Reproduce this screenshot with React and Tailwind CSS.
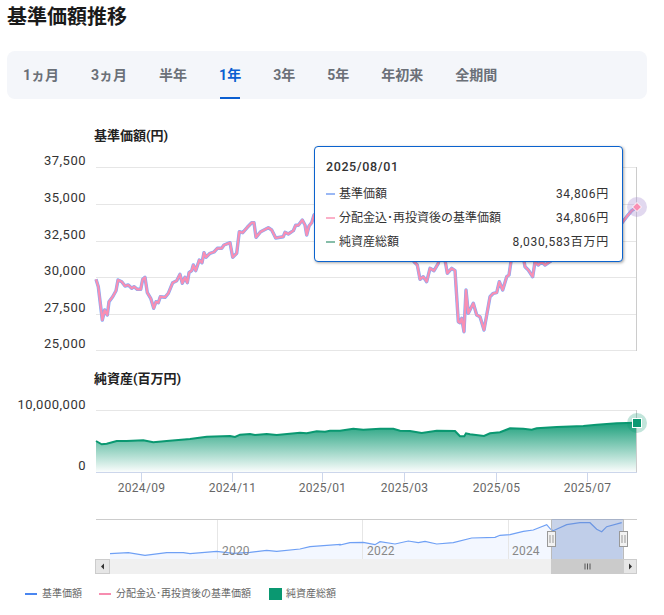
const font = { fontFamily: 'Roboto, "Noto Sans CJK JP", sans-serif' };

const tabs = ['1ヵ月', '3ヵ月', '半年', '1年', '3年', '5年', '年初来', '全期間'];

const zoomed = (pts, ox, oy) => pts.map(([x, y]) => [ox + x / 3, oy + y / 3]);
const line = (pts) => pts.map(([x, y]) => `${x.toFixed(1)},${y.toFixed(1)}`).join(' ');

const price = [
  ...zoomed([[228,478],[235,500],[247,600],[254,570],[262,585],[267,545],[278,530],[288,512],[294,480],[305,485],[315,498],[325,495],[335,505],[342,500],[352,508],[362,508],[368,478],[375,472],[382,518],[392,535],[401,565],[408,545],[415,548],[421,530],[435,532],[445,520],[458,488],[470,482],[480,463],[487,490],[495,472],[502,488],[507,458],[515,452],[520,435],[527,452],[538,420],[546,428],[552,398],[558,412],[570,400],[582,396],[592,385],[605,385],[612,375],[630,368],[638,412],[650,400],[658,335],[668,338],[682,322],[695,308],[702,308],[708,352],[722,335],[745,323],[755,330],[767,354],[790,350],[795,337],[805,342],[820,332],[827,316],[835,316],[847,300],[855,315],[860,345],[867,318],[875,308],[882,285]], 20, 120),
  [330, 205], [370, 190], [405, 210],
  ...zoomed([[312,365],[322,375],[330,418],[340,410],[350,425],[360,385],[372,392],[385,370],[390,340],[405,360],[412,400],[425,385],[435,392],[445,545],[450,548],[455,535],[462,575],[468,450],[475,520],[490,490],[500,525],[510,530],[522,570],[540,470],[550,460],[560,458],[568,425],[578,450],[590,410],[597,405],[605,350],[622,300],[640,350],[645,380],[655,390],[668,410],[675,365],[685,375],[695,365],[705,375],[720,365],[800,300],[935,250],[950,230],[965,212],[980,202]], 310, 140),
];

const assets = [
  ...zoomed([[288,228],[305,238],[320,236],[350,228],[380,228],[430,226],[460,232],[500,228],[570,222],[620,215],[690,213],[705,216],[720,209],[750,207],[765,210],[800,207],[830,210],[900,203],[920,205],[950,199],[975,200],[990,197]], 0, 365),
  ...zoomed([[30,197],[70,191],[100,194],[150,191],[190,191],[210,197],[240,198],[275,204],[320,197],[375,198],[390,214],[403,214],[408,205],[420,208],[462,213],[480,205],[510,202],[540,190],[580,191],[605,194],[620,190],[680,186],[760,183],[800,179],[860,175],[920,173]], 330, 365),
];

const overview = [
  ...zoomed([[330,131],[385,128],[435,136],[500,128],[550,128],[570,131],[650,124],[700,130],[750,127],[800,121],[830,124],[900,117],[930,110],[1020,103]], 0, 510),
  ...zoomed([[0,105],[30,98],[70,97],[105,104],[120,95],[165,102],[205,93],[235,98],[255,94],[290,102],[340,98],[395,84],[465,82],[480,76],[510,74],[550,64],[580,60],[620,44],[632,58],[640,62],[680,44],[720,38],[750,38],[770,58],[785,65],[800,50],[845,38]], 340, 510),
];

const priceAxis = [
  ['37,500', 167],
  ['35,000', 204],
  ['32,500', 241],
  ['30,000', 277],
  ['27,500', 314],
  ['25,000', 350],
];

const dates = [
  ['2024/09', 141],
  ['2024/11', 232],
  ['2025/01', 322],
  ['2025/03', 404],
  ['2025/05', 496],
  ['2025/07', 587],
];

const rows = [
  ['基準価額', '34,806円', 'bg-[#9ab8f5]'],
  ['分配金込･再投資後の基準価額', '34,806円', 'bg-[#fbb0c8]'],
  ['純資産総額', '8,030,583百万円', 'bg-[#86bda9]'],
];

const PriceChart = () => (
  <svg width="664" height="208" viewBox="0 152 664 208" className="block">
    {priceAxis.map(([label, y]) => (
      <g key={label}>
        <line x1="96" x2="637" y1={y + 0.5} y2={y + 0.5} stroke="#e6e6e6" />
        <text x="86" y={y - 2} textAnchor="end" fontSize="13" letterSpacing="0.5" fill="#333">{label}</text>
      </g>
    ))}
    <line x1="636.5" x2="636.5" y1="167" y2="351" stroke="#ccc" />
    <polyline points={line(price)} fill="none" stroke="#85abf6" strokeWidth="3.4" strokeLinejoin="round" />
    <polyline points={line(price)} fill="none" stroke="#f98fb3" strokeWidth="2.2" strokeLinejoin="round" />
    <circle cx="637" cy="207" r="10" fill="#a98fd0" fillOpacity="0.35" />
    <path d="M637 202.5 L641.5 207 L637 211.5 L632.5 207 Z" fill="#f98fb3" stroke="#fff" />
  </svg>
);

const AssetChart = () => (
  <svg width="664" height="112" viewBox="0 398 664 112" className="block">
    <defs>
      <linearGradient id="assetFill" x1="0" y1="0" x2="0" y2="1">
        <stop offset="0" stopColor="#0a9871" stopOpacity="0.92" />
        <stop offset="1" stopColor="#0a9871" stopOpacity="0.02" />
      </linearGradient>
    </defs>
    <line x1="96" x2="637" y1="410.5" y2="410.5" stroke="#e6e6e6" />
    <text x="86" y="408.5" textAnchor="end" fontSize="13" letterSpacing="0.5" fill="#333">10,000,000</text>
    <text x="86" y="470" textAnchor="end" fontSize="13" letterSpacing="0.5" fill="#333">0</text>
    <polygon points={`96,472 ${line(assets)} 637,472`} fill="url(#assetFill)" />
    <polyline points={line(assets)} fill="none" stroke="#0a9871" strokeWidth="2" />
    <line x1="636.5" x2="636.5" y1="410" y2="472" stroke="#ccc" />
    <line x1="96" x2="637" y1="472.5" y2="472.5" stroke="#ccd6eb" />
    {dates.map(([label, x]) => (
      <g key={label}>
        <line x1={x + 0.5} x2={x + 0.5} y1="472" y2="482" stroke="#ccd6eb" />
        <text x={x + 0.5} y="491.5" textAnchor="middle" fontSize="12" letterSpacing="0.3" fill="#666">{label}</text>
      </g>
    ))}
    <circle cx="637" cy="423" r="10" fill="#0a9871" fillOpacity="0.25" />
    <rect x="632.5" y="418.5" width="9" height="9" fill="#0a9871" stroke="#fff" />
  </svg>
);

const Overview = () => (
  <svg width="664" height="75" viewBox="0 510 664 75" className="block">
    <polygon points={`110,559 ${line(overview)} 622,559`} fill="#f3f7ff" />
    {[217, 362, 508].map((x) => (
      <line key={x} x1={x + 0.5} x2={x + 0.5} y1="519" y2="559" stroke="#e6e6e6" />
    ))}
    <line x1="96" x2="637" y1="519.5" y2="519.5" stroke="#ccc" />
    <polyline points={line(overview)} fill="none" stroke="#6fa0f5" strokeWidth="1.2" />
    {[['2020', 222], ['2022', 367], ['2024', 512]].map(([label, x]) => (
      <text key={label} x={x} y="555" fontSize="12" letterSpacing="0.2" fill="#888">{label}</text>
    ))}
    <rect x="551" y="519" width="72" height="40" fill="#6685c2" fillOpacity="0.36" />
    <rect x="96" y="559" width="541" height="15" fill="#f0f0f0" />
    <rect x="551" y="559" width="72" height="15" fill="#cbcbcb" />
    <path d="M585 563.5v6M587.5 563.5v6M590 563.5v6" stroke="#555" />
    <rect x="95.5" y="559.5" width="14" height="14" fill="#e6e6e6" stroke="#ccc" />
    <path d="M104 563.5v6l-3-3z" fill="#333" />
    <rect x="623.5" y="559.5" width="13" height="14" fill="#e6e6e6" stroke="#ccc" />
    <path d="M629 563.5v6l3-3z" fill="#333" />
    {[551, 623].map((x) => (
      <g key={x}>
        <line x1={x + 0.5} x2={x + 0.5} y1="519" y2="559" stroke="#bbb" />
        <rect x={x - 3.5} y="531.5" width="8" height="15" fill="#f2f2f2" stroke="#999" />
        <path d={`M${x - 1} 535v8M${x + 2} 535v8`} stroke="#999" />
      </g>
    ))}
  </svg>
);

const LegendLine = ({ color, children }) => (
  <div className="flex items-center gap-[5px]">
    <span className={`h-[2px] w-[12px] ${color}`} />
    <span>{children}</span>
  </div>
);

export default function App() {
  return (
    <div className="relative w-[664px] bg-white text-[#333]" style={font}>
      <h1 className="h-[34px] px-[7px] text-[20px] font-bold leading-[35px] text-[#1a1a1a]">基準価額推移</h1>

      <div className="ml-[7px] mt-[17px] flex h-[48px] w-[640px] rounded-lg bg-[#f4f6fa]">
        {tabs.map((tab) => (
          <div
            key={tab}
            className={`relative flex items-center px-4 pt-[1px] text-[14px] font-bold ${tab === '1年' ? 'text-[#0b5fd1]' : 'text-[#6b7078]'}`}
          >
            {tab}
            {tab === '1年' && <span className="absolute bottom-0 left-[17px] h-[2px] w-[20px] bg-[#0b5fd1]" />}
          </div>
        ))}
      </div>

      <div className="mt-[21px] h-[32px] pl-[94px] text-[13px] font-bold leading-[32px] text-[#222]">基準価額(円)</div>
      <PriceChart />
      <div className="h-[38px] pl-[94px] text-[13px] font-bold leading-[38px] text-[#222]">純資産(百万円)</div>
      <AssetChart />
      <Overview />

      <div className="flex h-[17px] items-center pl-[25px] text-[10px] text-[#666]">
        <LegendLine color="bg-[#4a86f0]">基準価額</LegendLine>
        <div className="ml-[17px]">
          <LegendLine color="bg-[#f78db0]">分配金込･再投資後の基準価額</LegendLine>
        </div>
        <span className="ml-[18px] mr-[4px] h-[12px] w-[13px] bg-[#0a9871]" />
        <span>純資産総額</span>
      </div>

      <div className="absolute left-[314px] top-[146px] h-[116px] w-[309px] rounded-[4px] border border-[#0b63ce] bg-white pl-[11px] pr-[13px] pt-[11px] shadow-[1px_1px_3px_rgba(0,0,0,0.35)]">
        <div className="text-[12.5px] font-medium leading-[18px] tracking-[0.6px]">2025/08/01</div>
        <div className="mt-[6px] flex flex-col">
          {rows.map(([name, value, color]) => (
            <div key={name} className="flex h-[24px] items-center justify-between text-[12px]">
              <div className="flex items-center gap-[4px]">
                <span className={`h-[2px] w-[9px] ${color}`} />
                <span>{name}</span>
              </div>
              <span className="tracking-[0.72px]">{value}</span>
            </div>
          ))}
        </div>
      </div>
    </div>
  );
}
